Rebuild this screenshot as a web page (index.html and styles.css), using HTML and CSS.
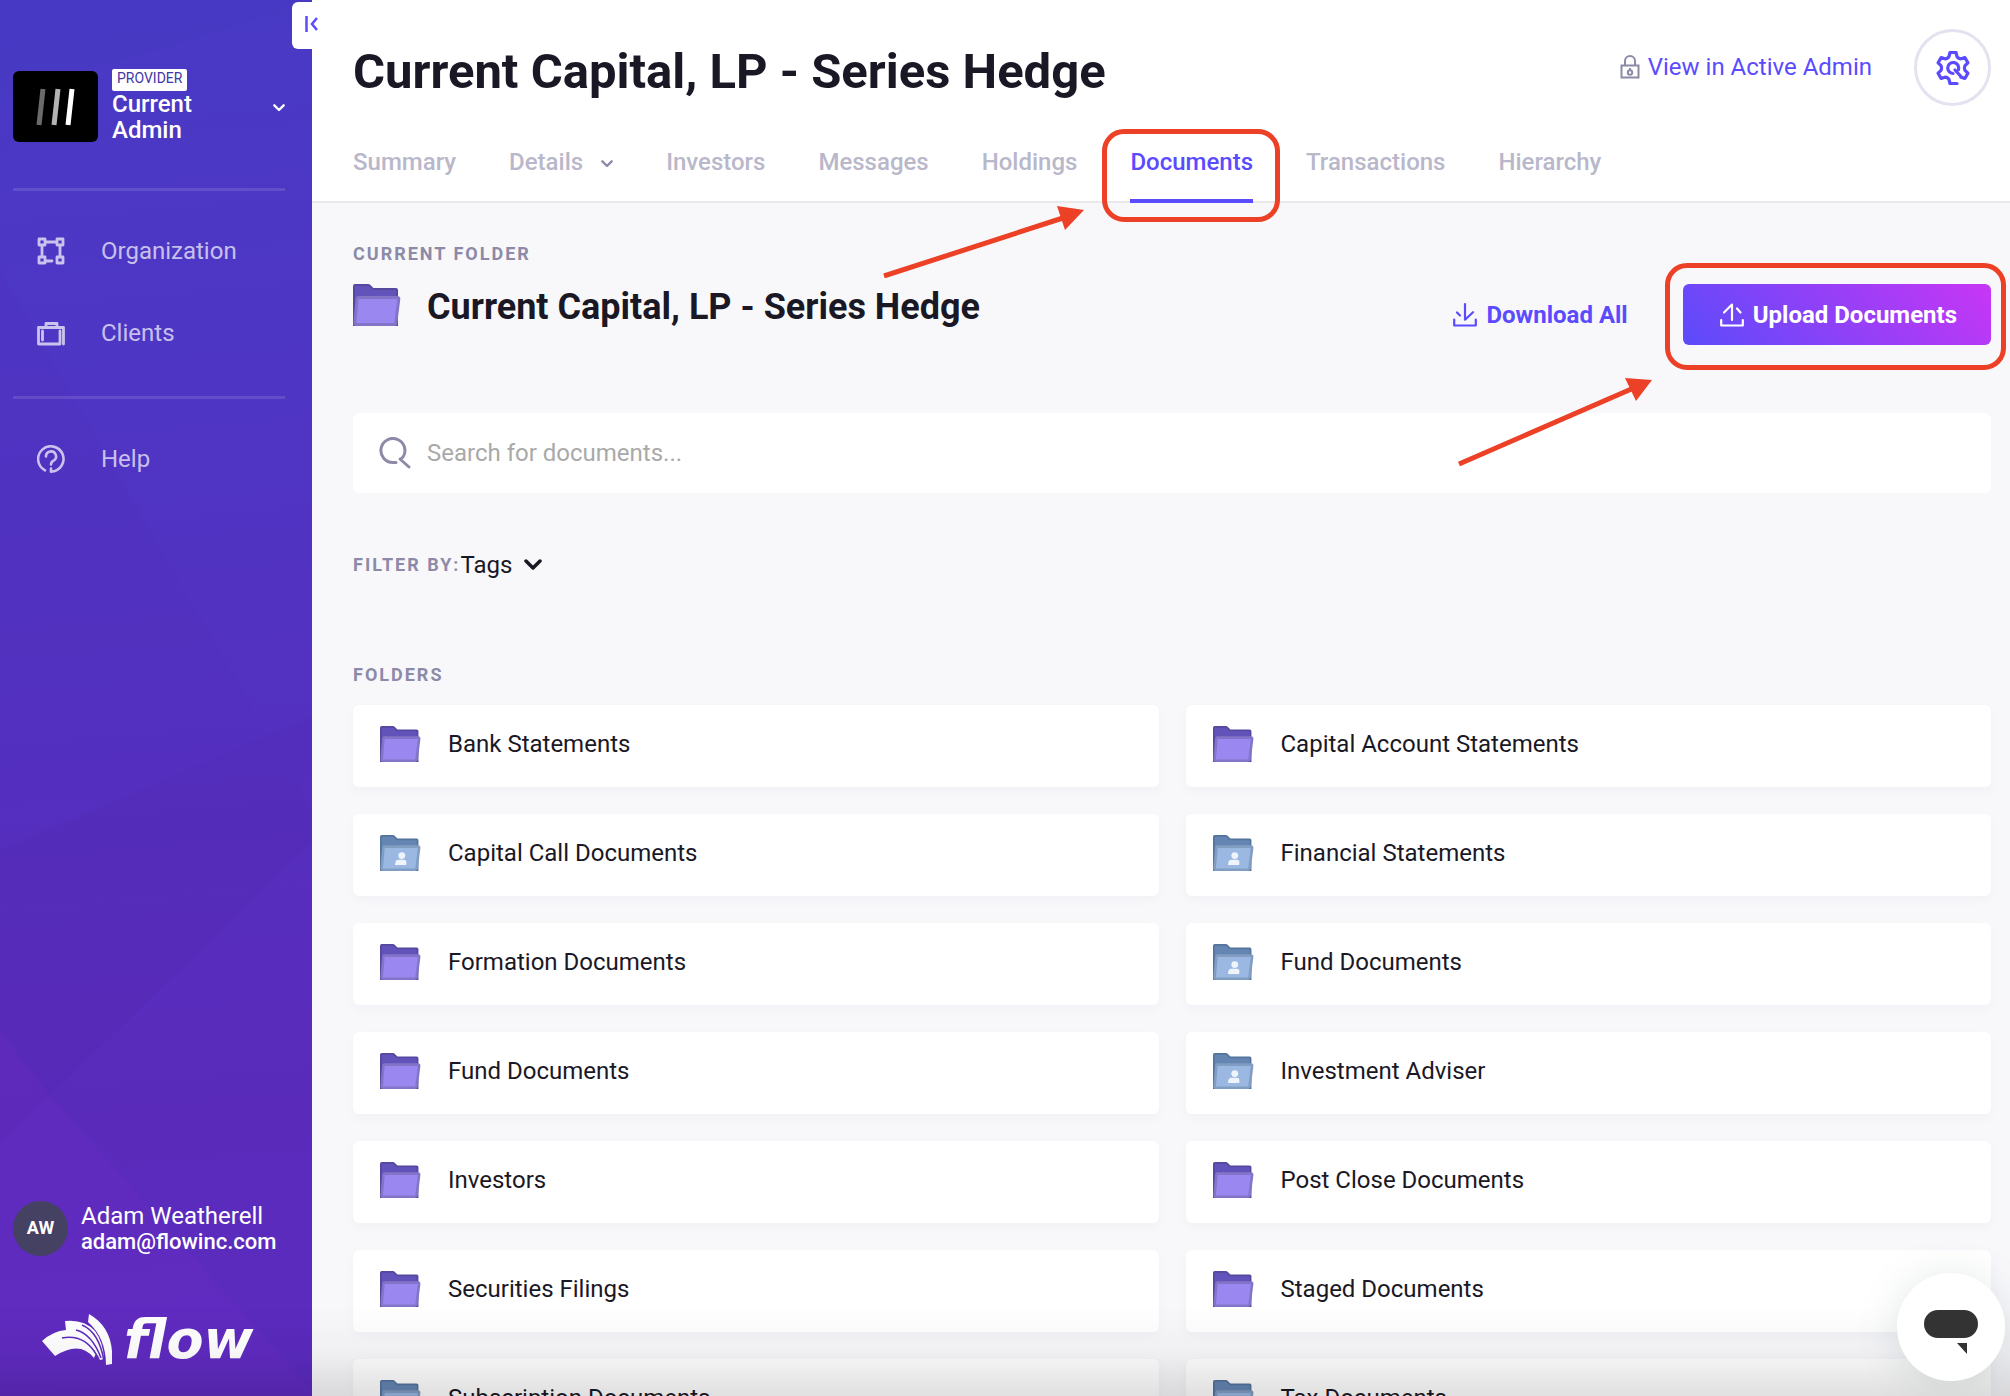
FILE: index.html
```html
<!DOCTYPE html>
<html lang="en">
<head>
    <meta charset="UTF-8">
    <meta name="viewport" content="width=device-width, initial-scale=1.0">
    <title>Current Capital, LP - Series Hedge</title>
    <link rel="stylesheet" href="styles.css">
</head>
<body>
    <!-- shared icons -->
    <svg class="sprite" aria-hidden="true">
        <symbol id="folder" viewBox="0 0 48 42">
            <path d="M1 41V2q0-1 1-1h13q1 0 2 1l3 3h23q1 0 1 1v35z" fill="#6253bb" stroke="#54489f" stroke-width="2"/>
            <path d="M5 13.500h39.500q1.500 0 1.300 1.500l-3 24q-.2 1.500-1.800 1.500H3q-1.300 0-1.100-1.500L4 15q.2-1.500 1-1.500z" fill="#9a88f0" stroke="#8474c8" stroke-width="3"/>
        </symbol>
        <symbol id="folder-shared" viewBox="0 0 48 42">
            <path d="M1 41V2q0-1 1-1h13q1 0 2 1l3 3h23q1 0 1 1v35z" fill="#6586b3" stroke="#54749c" stroke-width="2"/>
            <path d="M5 13.500h39.500q1.500 0 1.300 1.500l-3 24q-.2 1.500-1.800 1.500H3q-1.300 0-1.100-1.500L4 15q.2-1.500 1-1.500z" fill="#9ab8e2" stroke="#819dc2" stroke-width="3"/>
            <circle cx="25.500" cy="24" r="4" fill="#eff4fb"/>
            <path d="M17.500 35l.6-3.500q.7-2.500 3.500-2.500h6.500q2.800 0 2.800 2.500l-.2 3.500z" fill="#eff4fb"/>
        </symbol>
        <symbol id="chevron" viewBox="0 0 18 12">
            <path d="M2 2l7 7 7-7" fill="none" stroke="currentColor" stroke-width="3.500" stroke-linecap="round" stroke-linejoin="round"/>
        </symbol>
    </svg>

    <div class="layout">
        <aside class="sidebar">
            <svg class="facets" viewBox="0 0 312 1396" preserveAspectRatio="none" aria-hidden="true">
                <path d="M0 100L312 0H0z" fill="#3f3cc0" opacity=".12"/>
                <path d="M0 270L312 813V1396H0z" fill="#5a22b0" opacity=".08"/>
                <path d="M0 850L312 717V843L50 1095 0 1145z" fill="#4a2299" opacity=".1"/>
                <path d="M0 1030L50 1095 312 1390V1396H0z" fill="#7a2cd0" opacity=".16"/>
            </svg>

            <button class="switcher">
                <svg class="switcher-logo" viewBox="0 0 85 71" aria-hidden="true">
                    <rect width="85" height="71" rx="6" fill="#000"/>
                    <g fill="none" stroke-width="5">
                        <path d="M30 18l-4 36" stroke="#6b6b6b"/>
                        <path d="M45 18l-4 36" stroke="#b3b3b3"/>
                        <path d="M59 18l-4 36" stroke="#fff"/>
                    </g>
                </svg>
                <span class="switcher-name">
                    <span class="badge">PROVIDER</span>
                    <span>Current Admin</span>
                </span>
                <svg class="chevron-small"><use href="#chevron"/></svg>
            </button>

            <nav class="side-nav">
                <a href="#organization">
                    <svg viewBox="0 0 28 28"><g fill="none" stroke="currentColor" stroke-width="2.800" stroke-linecap="round" stroke-linejoin="round"><path d="M2 2h6v6H2zM20 2h6v6h-6zM2 20h6v6H2zM20 20h6v6h-6zM8 5h12M5 8v12M23 8v12M8 24h7"/></g></svg>
                    Organization
                </a>
                <a href="#clients">
                    <svg viewBox="0 0 28 28"><g fill="none" stroke="currentColor" stroke-width="2.800" stroke-linecap="round" stroke-linejoin="round"><path d="M26.500 25V8.500H1.500v16.500h21.500V12M9 8.500V4.500h11v4M5.500 12v9"/></g></svg>
                    Clients
                </a>
            </nav>
            <nav class="side-nav">
                <a href="#help">
                    <svg viewBox="0 0 28 28"><g fill="none" stroke="currentColor" stroke-width="2.600" stroke-linecap="round" stroke-linejoin="round"><path d="M8 25.300A12.700 12.700 0 1 1 14 26.700M9 11.500a5 5 0 1 1 7.500 4.200Q14 17 14 19.500M14 23.500v3.200"/></g></svg>
                    Help
                </a>
            </nav>

            <div class="user">
                <span class="avatar">AW</span>
                <div>
                    <div>Adam Weatherell</div>
                    <div class="email">adam@flowinc.com</div>
                </div>
            </div>
            <div class="brand">
                <svg viewBox="0 0 70 52" aria-hidden="true">
                    <g fill="#fff">
                        <path d="M0 27Q11 17 24 16L23 7Q42 5 53 17 61 28 62 45L58 46Q56 41 54 39L52 44Q38 26 13 42z"/>
                        <path d="M47 0Q68 12 70 37V50L64 51Q64 24 46 8z"/>
                    </g>
                    <path d="M34 16Q50 20 59 44M20 24Q42 20 54 40M40 11Q57 18 62 47" fill="none" stroke="#5f2cc0" stroke-width="1.500"/>
                </svg>
                <span>flow</span>
            </div>
        </aside>

        <button class="collapse" aria-label="Collapse menu">
            <svg viewBox="0 0 14 18"><path d="M1.500 1v16M12 3L7 9l5 6" fill="none" stroke="currentColor" stroke-width="2.500"/></svg>
        </button>

        <main class="main">
            <header class="header">
                <div class="header-top">
                    <h1>Current Capital, LP - Series Hedge</h1>
                    <div class="header-actions">
                        <a class="admin-link" href="#admin">
                            <svg viewBox="0 0 20 24"><g fill="none" stroke="#8c8aa7" stroke-width="2"><path d="M1.500 10.500h17v12h-17zM5 10V6a5 5 0 0 1 10 0v4"/><circle cx="10" cy="17.500" r="2.200"/><path d="M10 15v-2"/></g></svg>
                            View in Active Admin
                        </a>
                        <button class="settings" aria-label="Settings">
                            <svg viewBox="0 0 34 34">
                                <g transform="translate(17 17)" fill="none" stroke="currentColor" stroke-width="3.200" stroke-linecap="round" stroke-linejoin="round">
                                    <path d="M8 9.200L11.900 10.400 14.900 5.200 12 2.300Q11 0 12 -2.300L14.900 -5.200 11.900 -10.400 8 -9.200Q5 -9.400 4 -11.500L3 -15.500H-3L-4 -11.500Q-5 -9.400 -8 -9.200L-11.900 -10.400 -14.900 -5.200 -12 -2.300Q-11 0 -12 2.300L-14.900 5.200 -11.900 10.400 -8 9.200Q-5 9.400 -4 11.500L-3 15.500H4"/>
                                    <path d="M0 5.500A5.500 5.500 0 1 1 5.500 1.500M2 2L8 8.500"/>
                                </g>
                            </svg>
                        </button>
                    </div>
                </div>
                <nav class="tabs">
                    <a href="#summary">Summary</a>
                    <a href="#details">Details <svg class="chevron-small"><use href="#chevron"/></svg></a>
                    <a href="#investors">Investors</a>
                    <a href="#messages">Messages</a>
                    <a href="#holdings">Holdings</a>
                    <a class="active" href="#documents">Documents
                        <svg class="arrow arrow-tab" viewBox="0 0 204 72" aria-hidden="true"><path d="M2 70L184 11" fill="none" stroke="#ec4126" stroke-width="5"/><path d="M202 4L175 0l8 24z" fill="#ec4126"/></svg>
                    </a>
                    <a href="#transactions">Transactions</a>
                    <a href="#hierarchy">Hierarchy</a>
                </nav>
            </header>

            <div class="content">
                <h2 class="label">Current Folder</h2>
                <div class="current">
                    <svg class="current-icon"><use href="#folder"/></svg>
                    <h3>Current Capital, LP - Series Hedge</h3>
                    <div class="actions">
                        <button class="download">
                            <svg viewBox="0 0 24 24"><path d="M1.200 16.500v6h21.600v-6M12 1.200v15.500l8-7.500M7 12.500L4 9.500" fill="none" stroke="currentColor" stroke-width="2.200" stroke-linecap="round" stroke-linejoin="round"/></svg>
                            Download All
                        </button>
                        <div class="highlight">
                            <button class="upload">
                                <svg viewBox="0 0 24 24"><path d="M1.200 17v5.500h21.600V17M12 17V1.500L4 9.500M17 5.500l3.500 4" fill="none" stroke="currentColor" stroke-width="2.200" stroke-linecap="round" stroke-linejoin="round"/></svg>
                                Upload Documents
                            </button>
                            <svg class="arrow arrow-upload" viewBox="0 0 196 88" aria-hidden="true"><path d="M1 86L178 9" fill="none" stroke="#ec4126" stroke-width="5"/><path d="M194 2L167 0l11 23z" fill="#ec4126"/></svg>
                        </div>
                    </div>
                </div>

                <div class="search">
                    <svg viewBox="0 0 32 32" aria-hidden="true"><path d="M17 25.500H14A12 12 0 1 1 24 20Q22 22 21 22L30 30" fill="none" stroke="#8c8aa7" stroke-width="3" stroke-linecap="round" stroke-linejoin="round"/></svg>
                    <input type="search" aria-label="Search for documents" placeholder="Search for documents...">
                </div>

                <div class="filter">
                    <label class="label" for="tags">Filter by:</label>
                    <select id="tags">
                        <option>Tags</option>
                    </select>
                    <svg class="chevron"><use href="#chevron"/></svg>
                </div>

                <h2 class="label">Folders</h2>
                <div class="folders">
                    <a href="#f1"><svg><use href="#folder"/></svg>Bank Statements</a>
                    <a href="#f2"><svg><use href="#folder"/></svg>Capital Account Statements</a>
                    <a href="#f3"><svg><use href="#folder-shared"/></svg>Capital Call Documents</a>
                    <a href="#f4"><svg><use href="#folder-shared"/></svg>Financial Statements</a>
                    <a href="#f5"><svg><use href="#folder"/></svg>Formation Documents</a>
                    <a href="#f6"><svg><use href="#folder-shared"/></svg>Fund Documents</a>
                    <a href="#f7"><svg><use href="#folder"/></svg>Fund Documents</a>
                    <a href="#f8"><svg><use href="#folder-shared"/></svg>Investment Adviser</a>
                    <a href="#f9"><svg><use href="#folder"/></svg>Investors</a>
                    <a href="#f10"><svg><use href="#folder"/></svg>Post Close Documents</a>
                    <a href="#f11"><svg><use href="#folder"/></svg>Securities Filings</a>
                    <a href="#f12"><svg><use href="#folder"/></svg>Staged Documents</a>
                    <a href="#f13"><svg><use href="#folder-shared"/></svg>Subscription Documents</a>
                    <a href="#f14"><svg><use href="#folder-shared"/></svg>Tax Documents</a>
                </div>
            </div>
        </main>
    </div>

    <div class="fade"></div>
    <button class="chat" aria-label="Open chat">
        <svg viewBox="0 0 54 46"><path d="M14 0h26a14 14 0 0 1 0 28H14a14 14 0 0 1 0-28zM33 33h10v11z" fill="#333"/></svg>
    </button>
</body>
</html>
```
FILE: styles.css
```css
* {
    box-sizing: border-box;
}
body {
    margin: 0;
    background-color: #f8f8fb;
    color: #1a1825;
    font-family: Roboto, sans-serif;
    font-size: 24px;
    line-height: 28px;
}
a {
    color: inherit;
    text-decoration: none;
}
button, input, select {
    border: none;
    padding: 0;
    background: none;
    color: inherit;
    font: inherit;
}
button {
    cursor: pointer;
}
h1, h2, h3 {
    margin: 0;
}
svg {
    display: block;
    flex: none;
}
.sprite {
    position: absolute;
    width: 0;
    height: 0;
}
.layout {
    display: grid;
    grid-template-columns: 312px 1fr;
    height: 100vh;
    position: relative;
    overflow: hidden;
}

/* sidebar */
.sidebar {
    position: relative;
    z-index: 0;
    display: flex;
    flex-direction: column;
    padding: 69px 27px 30px 13px;
    background: linear-gradient(175deg, #483ac4 0%, #4e36c4 25%, #5430c0 55%, #5b2cbc 80%, #5c2cc0 100%);
    color: #fff;
}
.facets {
    position: absolute;
    inset: 0;
    z-index: -1;
    width: 100%;
    height: 100%;
}
.switcher {
    display: flex;
    align-items: center;
    gap: 14px;
    padding-bottom: 45px;
    text-align: left;
    font-weight: 500;
    line-height: 26px;
}
.switcher-logo {
    width: 85px;
    height: 71px;
}
.switcher-name {
    display: flex;
    flex: 1;
    flex-direction: column;
    align-items: flex-start;
    padding-right: 56px;
}
.badge {
    padding: 0 5px 4px;
    border-radius: 2px;
    background-color: #fff;
    color: #4136a8;
    font-size: 14px;
    font-weight: 400;
    line-height: 18px;
}
.chevron-small {
    width: 12px;
    height: 8px;
    margin-top: 4px;
}
.side-nav {
    display: flex;
    flex-direction: column;
    gap: 54px;
    padding: 46px 24px 49px;
    border-top: 3px solid rgba(255, 255, 255, 0.12);
    color: rgba(255, 255, 255, 0.7);
}
.side-nav a {
    display: flex;
    align-items: center;
    gap: 36px;
}
.side-nav svg {
    width: 28px;
    height: 28px;
}
.user {
    display: flex;
    align-items: center;
    gap: 13px;
    margin-top: auto;
    line-height: 26px;
}
.email {
    font-size: 22px;
    font-weight: 500;
}
.avatar {
    flex: none;
    width: 55px;
    height: 55px;
    border-radius: 50%;
    background-color: #454163;
    font-size: 18px;
    font-weight: 700;
    line-height: 54px;
    text-align: center;
}
.brand {
    display: flex;
    align-items: center;
    gap: 12px;
    padding: 58px 0 0 29px;
    font-family: "DejaVu Sans", sans-serif;
    font-size: 54px;
    font-style: italic;
    font-weight: 700;
    line-height: 52px;
}
.brand svg {
    width: 70px;
    height: 52px;
}
.collapse {
    position: absolute;
    top: 2px;
    left: 292px;
    z-index: 1;
    width: 28px;
    height: 47px;
    padding: 0 0 4px 13px;
    border-radius: 6px 0 0 6px;
    background-color: #fff;
    color: #5b4bff;
}
.collapse svg {
    width: 14px;
    height: 18px;
}

/* header */
.main {
    min-width: 0;
    overflow: hidden;
}
.header {
    padding: 29px 19px 0 41px;
    border-bottom: 2px solid #e9e9ec;
    background-color: #fff;
}
.header-top {
    display: flex;
    align-items: flex-start;
    justify-content: space-between;
}
h1 {
    padding-top: 11px;
    font-size: 49px;
    font-weight: 700;
    line-height: 64px;
}
.header-actions {
    display: flex;
    align-items: center;
    gap: 42px;
}
.admin-link {
    display: flex;
    align-items: center;
    gap: 8px;
    margin-bottom: 2px;
    color: #5b4bff;
}
.admin-link svg {
    width: 20px;
    height: 24px;
}
.settings {
    display: grid;
    place-items: center;
    width: 77px;
    height: 77px;
    border: 3px solid #e4e2ee;
    border-radius: 50%;
    color: #5b4bff;
}
.settings svg {
    width: 34px;
    height: 34px;
}
.tabs {
    display: flex;
    gap: 53px;
    margin-top: 42px;
    color: #b9b7ca;
    font-weight: 500;
}
.tabs a {
    position: relative;
    display: flex;
    align-items: center;
    height: 53px;
    padding-bottom: 25px;
}
.tabs .chevron-small {
    margin-left: 18px;
    color: #8c8aa7;
}
.tabs .active {
    height: 55px;
    margin-bottom: -2px;
    border-bottom: 4px solid #5b4bff;
    padding-bottom: 23px;
    color: #5b4bff;
}

/* callouts */
.active::after, .highlight::after {
    content: "";
    position: absolute;
    z-index: 2;
    border: 5px solid #ec4126;
    border-radius: 22px;
    pointer-events: none;
}
.active::after {
    inset: -19px -27px -23px -28px;
}
.highlight::after {
    inset: -21px -15px -25px -18px;
}
.arrow {
    position: absolute;
    z-index: 2;
    pointer-events: none;
}
.arrow-tab {
    top: 58px;
    right: 167px;
    width: 204px;
    height: 72px;
}
.arrow-upload {
    top: 94px;
    right: 337px;
    width: 196px;
    height: 88px;
}

/* content */
.content {
    padding: 39px 19px 0 41px;
}
.label {
    color: #8c8aa7;
    font-size: 18px;
    font-weight: 700;
    letter-spacing: 2px;
    line-height: 24px;
    text-transform: uppercase;
}
.current {
    display: flex;
    align-items: flex-start;
    padding-top: 18px;
}
.current-icon {
    width: 48px;
    height: 42px;
}
h3 {
    margin-left: 26px;
    font-size: 36px;
    font-weight: 700;
    line-height: 46px;
}
.actions {
    display: flex;
    align-items: center;
    gap: 55px;
    margin-left: auto;
    font-weight: 700;
}
.actions button {
    display: flex;
    align-items: center;
    gap: 9px;
}
.actions button svg {
    width: 24px;
    height: 24px;
}
.download {
    color: #5b4bff;
}
.highlight {
    position: relative;
}
.upload {
    height: 61px;
    padding: 0 34px 0 37px;
    border-radius: 6px;
    background: linear-gradient(45deg, #5b4bfa, #c836f5);
    color: #fff;
}
.search {
    display: flex;
    align-items: center;
    gap: 16px;
    height: 80px;
    margin-top: 68px;
    padding: 0 26px;
    border-radius: 6px;
    background-color: #fff;
}
.search svg {
    width: 32px;
    height: 32px;
}
.search input {
    flex: 1;
    outline: none;
}
.search input::placeholder {
    color: #a9a9a9;
}
.filter {
    display: flex;
    align-items: center;
    margin: 58px 0 84px;
}
.filter select {
    appearance: none;
    height: 28px;
    cursor: pointer;
}
.filter .chevron {
    width: 18px;
    height: 12px;
    margin-left: 12px;
    pointer-events: none;
}
.folders {
    display: grid;
    grid-template-columns: 1fr 1fr;
    gap: 27px;
    padding-top: 18px;
}
.folders a {
    display: flex;
    align-items: center;
    gap: 27px;
    height: 82px;
    padding: 0 27px 4px;
    border-radius: 6px;
    background-color: #fff;
    box-shadow: 0 4px 12px rgba(30, 30, 60, 0.03);
}
.folders svg {
    width: 41px;
    height: 36px;
}
.fade {
    position: fixed;
    inset: auto 0 0 0;
    height: 90px;
    background: linear-gradient(rgba(0, 0, 0, 0), rgba(0, 0, 0, 0.03) 50%, rgba(0, 0, 0, 0.12));
    pointer-events: none;
}
.chat {
    position: fixed;
    right: 5px;
    bottom: 15px;
    display: grid;
    place-items: center;
    width: 108px;
    height: 108px;
    padding-top: 12px;
    border-radius: 50%;
    background-color: #fff;
    box-shadow: 0 4px 40px rgba(90, 110, 110, 0.18);
}
.chat svg {
    width: 54px;
    height: 46px;
}
```
